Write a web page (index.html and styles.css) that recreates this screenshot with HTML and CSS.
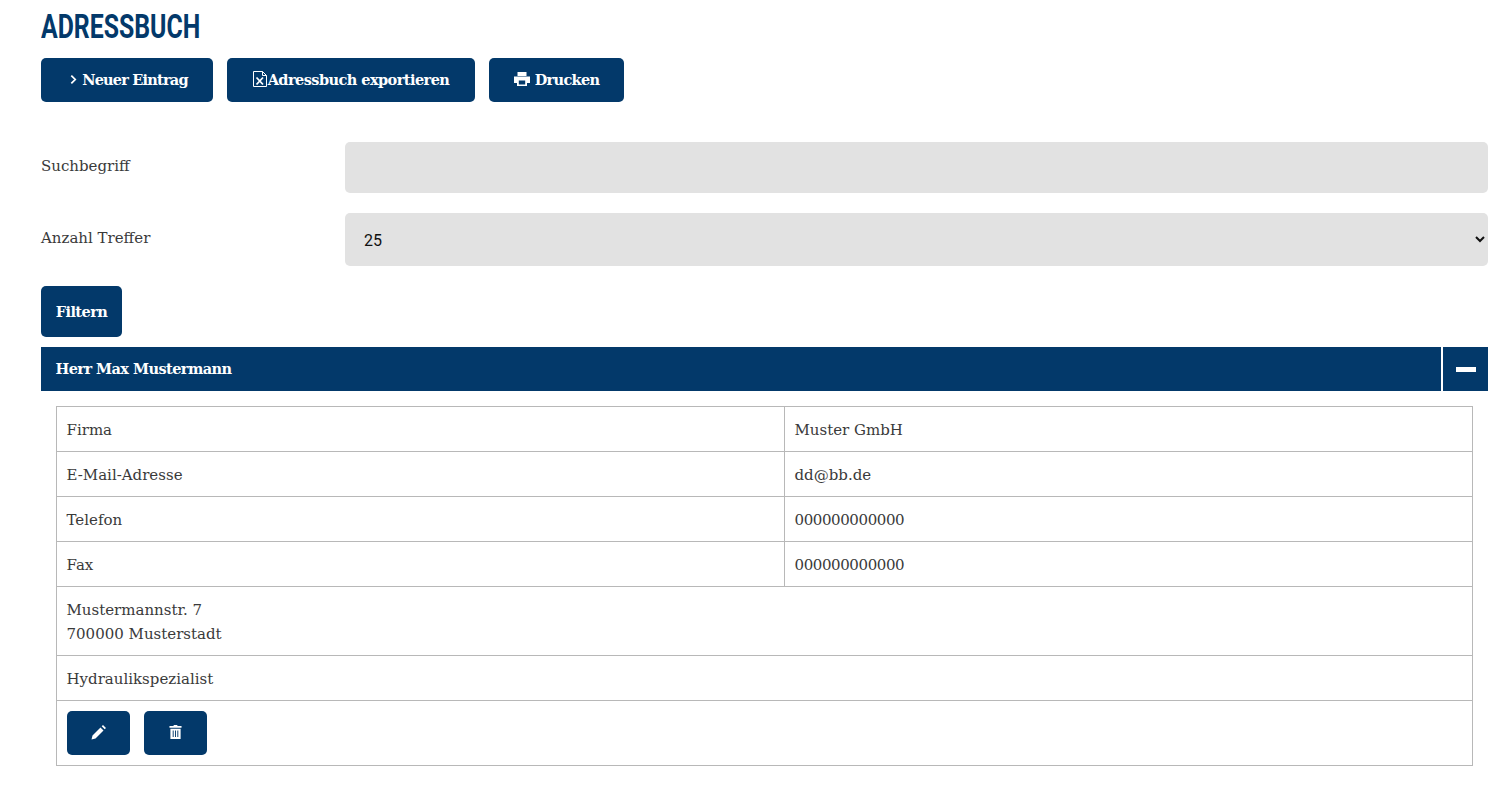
FILE: index.html
```html
<!DOCTYPE html>
<html lang="de">
<head>
<meta charset="utf-8">
<title>Adressbuch</title>
<link rel="stylesheet" href="styles.css">
</head>
<body>
<main class="page">
  <h1 class="title">ADRESSBUCH</h1>
  <div class="actions">
    <a class="btn btn-top btn-new" href="#"><svg class="ico-chev" viewBox="0 0 8 12" width="7" height="11"><path d="M1.500 1.500 6 6l-4.500 4.500" fill="none" stroke="#fff" stroke-width="2"/></svg><span>Neuer Eintrag</span></a>
    <a class="btn btn-top btn-export" href="#"><svg class="ico-xls" viewBox="0 0 14 16" width="14" height="16"><path d="M.5.500h9l4 4v11H.500z" fill="none" stroke="#fff"/><path d="M9.500.500v4h4" fill="none" stroke="#fff"/><path d="M3.500 6.500 10 13.500M10 6.500l-6.500 7" stroke="#fff" stroke-width="1.800" fill="none"/></svg><span>Adressbuch exportieren</span></a>
    <a class="btn btn-top btn-print" href="#"><svg class="ico-print" viewBox="0 0 16 14" width="16" height="14"><path d="M3.500 0h9v4h-9zM0 4.500h16V11h-3v3H3v-3H0zM4.800 8.500v4h6.400v-4z" fill="#fff" fill-rule="evenodd"/></svg><span>Drucken</span></a>
  </div>
  <form class="filter">
    <div class="field field-search">
      <label class="label" for="q">Suchbegriff</label>
      <input class="control control-input" id="q" type="text">
    </div>
    <div class="field field-count">
      <label class="label" for="n">Anzahl Treffer</label>
      <select class="control control-select" id="n"><option>25</option></select>
    </div>
    <button class="btn btn-filter" type="button">Filtern</button>
  </form>
  <section class="entry">
    <header class="entry-head">
      <div class="entry-name">Herr Max Mustermann</div>
      <div class="entry-toggle"><span class="minus"></span></div>
    </header>
    <div class="entry-body">
      <table class="details">
        <tr><td class="col-a">Firma</td><td>Muster GmbH</td></tr>
        <tr><td>E-Mail-Adresse</td><td>dd@bb.de</td></tr>
        <tr><td>Telefon</td><td class="num">000000000000</td></tr>
        <tr><td>Fax</td><td class="num">000000000000</td></tr>
        <tr><td colspan="2">Mustermannstr. 7<br>700000 Musterstadt</td></tr>
        <tr><td colspan="2">Hydraulikspezialist</td></tr>
        <tr><td colspan="2" class="tools">
          <div class="tool-row">
            <a class="btn btn-icon" href="#"><svg viewBox="0 0 15 15" width="15" height="15"><path d="M.5 14.500 1.500 10.500 9.500 2.500l3 3-8 8zM10.700 1.300 12 0l3 3-1.300 1.300z" fill="#fff"/></svg></a>
            <a class="btn btn-icon" href="#"><svg viewBox="0 0 14 15" width="13" height="14"><path d="M5 1V0h4v1h4.500v2H.500V1zM1.500 4h11v11h-11zM4 6v7h1V6zM6.500 6v7h1V6zM9 6v7h1V6z" fill="#fff" fill-rule="evenodd"/></svg></a>
          </div>
        </td></tr>
      </table>
    </div>
  </section>
</main>
</body>
</html>
```
FILE: styles.css
```css
* { box-sizing: border-box; }
html, body { margin: 0; padding: 0; background: #fff; }
body {
  font-family: "DejaVu Serif", "Liberation Serif", serif;
  font-size: 15px;
  color: #3a3a3a;
}
.page { padding: 0 1px 28px 41px; }
.title {
  margin: 0;
  height: 58px;
  padding-top: 6px;
  font-family: "Roboto", sans-serif;
  font-size: 34px;
  line-height: 40px;
  font-weight: 700;
  color: #03396a;
  transform: scaleX(0.73);
  transform-origin: left center;
}
.actions { display: flex; gap: 14px; }
.btn {
  display: inline-flex;
  align-items: center;
  justify-content: center;
  border: 0;
  border-radius: 5px;
  background: #03396a;
  color: #fff;
  font-family: inherit;
  font-size: 14.500px;
  letter-spacing: -0.550px;
  font-weight: 700;
  text-decoration: none;
}
.btn-top { height: 44px; padding-bottom: 2px; }
.btn-new { width: 172px; gap: 5px; padding-left: 4px; letter-spacing: -0.800px; }
.btn-export { width: 248px; gap: 1px; }
.btn-print { width: 135px; gap: 5px; letter-spacing: -0.700px; }
.filter { margin-top: 40px; }
.field { display: flex; align-items: flex-start; }
.field-search { height: 51px; }
.field-count { margin-top: 20px; height: 53px; }
.label { width: 304px; flex: none; line-height: 20px; padding-top: 14px; }
.field-count .label { padding-top: 15px; }
.control {
  flex: 1;
  border: 0;
  border-radius: 5px;
  background: #e2e2e2;
  color: #111;
  height: 100%;
  font-family: "Roboto", sans-serif;
  font-size: 16px;
}
.control-select { padding: 2px 0 0 15px; }
.btn-filter { display: flex; margin-top: 20px; width: 81px; height: 51px; }
.entry { margin-top: 10px; }
.entry-head {
  display: flex;
  height: 44px;
  background: #03396a;
  color: #fff;
  font-size: 14.500px;
  letter-spacing: -0.550px;
  font-weight: 700;
}
.entry-name { flex: 1; line-height: 44px; padding-left: 14.500px; }
.entry-toggle {
  width: 47px;
  border-left: 2px solid #fff;
  display: flex;
  align-items: center;
  justify-content: center;
}
.minus { width: 20px; height: 5px; background: #fff; }
.entry-body { padding: 15px; }
.details { width: 100%; border-collapse: collapse; table-layout: fixed; }
.details td {
  border: 1px solid #b8b8b8;
  padding: 11px 9.500px 9px;
  line-height: 24px;
}
.col-a { width: 728px; }
.details .num { letter-spacing: -0.400px; }
.details .tools { padding: 10px; }
.tool-row { display: flex; gap: 14px; }
.btn-icon { width: 63px; height: 44px; padding-bottom: 2px; }
```
